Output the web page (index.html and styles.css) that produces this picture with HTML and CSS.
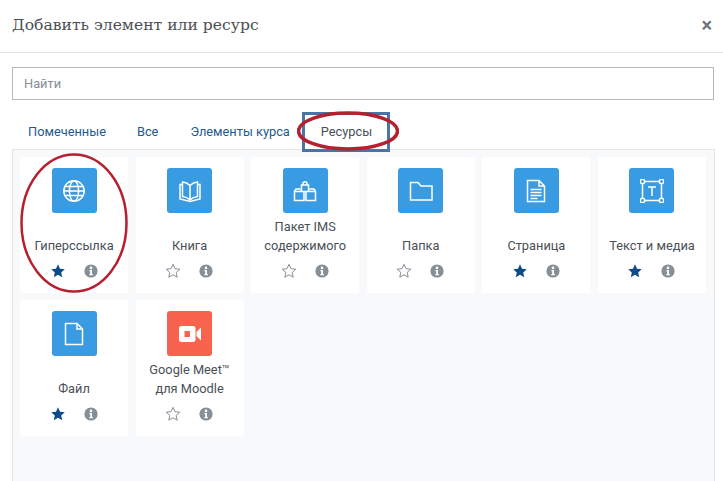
FILE: index.html
```html
<!DOCTYPE html>
<html lang="ru">
<head>
<meta charset="utf-8">
<title>Добавить элемент или ресурс</title>
<link rel="stylesheet" href="styles.css">
</head>
<body>
<svg width="0" height="0" class="defs">
  <symbol id="star" viewBox="0 0 16 16"><path d="M8 1.300l2 4.400 4.800.5-3.600 3.200 1 4.800L8 11.800 3.800 14.200l1-4.800L1.200 6.200 6 5.700z"/></symbol>
  <symbol id="info" viewBox="0 0 16 16"><circle cx="8" cy="8" r="6.600" fill="#868e96"/><circle cx="8" cy="4.900" r="1.300" fill="#fff"/><path d="M6.400 7h2.600v4h.9v1.200H6.300V11h.9V8.200h-.8z" fill="#fff"/></symbol>
</svg>
<main class="modal">
  <header class="modal-head">
    <h1 class="modal-title">Добавить элемент или ресурс</h1>
    <span class="close">×</span>
  </header>
  <div class="search"><input class="search-input" type="text" placeholder="Найти"></div>
  <nav class="tabs">
    <a class="tab">Помеченные</a>
    <a class="tab">Все</a>
    <a class="tab">Элементы курса</a>
    <a class="tab tab-active">Ресурсы</a>
  </nav>
  <section class="panel">
    <article class="card">
      <div class="tile"><svg viewBox="0 0 24 24" class="glyph"><circle cx="12" cy="12" r="10.200"/><ellipse cx="12" cy="12" rx="4.600" ry="10.200"/><path d="M3 7.400h18M1.800 12h20.400M3 16.600h18"/></svg></div>
      <div class="label">Гиперссылка</div>
      <div class="actions"><svg class="star on"><use href="#star"/></svg><svg class="info"><use href="#info"/></svg></div>
    </article>
    <article class="card">
      <div class="tile"><svg viewBox="0 0 24 24" class="glyph"><path d="M12 6.500C10 4.500 7 3.200 4.500 3v14.500c2.800.3 5.500 1.300 7.500 3.500 2-2.200 4.700-3.200 7.500-3.500V3C17 3.200 14 4.500 12 6.500zM12 6.500V21"/><path d="M4.500 5.500H2v14.500l10 2.500 10-2.500V5.500h-2.500"/></svg></div>
      <div class="label">Книга</div>
      <div class="actions"><svg class="star off"><use href="#star"/></svg><svg class="info"><use href="#info"/></svg></div>
    </article>
    <article class="card">
      <div class="tile"><svg viewBox="0 0 24 24" class="glyph"><path d="M8.500 6h7v6.500h-7zM9.800 6C9.800 1.800 14.200 1.800 14.200 6M1.500 12.500h9.500v9H1.500zM13 12.500h9.500v9H13zM1.500 12.500l1.500-2.500h5.500M22.500 12.500L21 10h-5.500"/></svg></div>
      <div class="label">Пакет IMS содержимого</div>
      <div class="actions"><svg class="star off"><use href="#star"/></svg><svg class="info"><use href="#info"/></svg></div>
    </article>
    <article class="card">
      <div class="tile"><svg viewBox="0 0 24 24" class="glyph"><path d="M1.500 3.500h7.500l3 3.500h11v14H1.500z"/></svg></div>
      <div class="label">Папка</div>
      <div class="actions"><svg class="star off"><use href="#star"/></svg><svg class="info"><use href="#info"/></svg></div>
    </article>
    <article class="card">
      <div class="tile"><svg viewBox="0 0 24 24" class="glyph"><path d="M3.500 1.500h11.500l5.500 5.500v15.500h-17zM15 1.500v5.500h5.500M6.500 10.500h11M6.500 13.500h11M6.500 16.500h11M6.500 19.500h7"/></svg></div>
      <div class="label">Страница</div>
      <div class="actions"><svg class="star on"><use href="#star"/></svg><svg class="info"><use href="#info"/></svg></div>
    </article>
    <article class="card">
      <div class="tile"><svg viewBox="0 0 24 24" class="glyph"><path d="M4.800 2.500h14.400M4.800 21.500h14.400M2.500 4.800v14.400M21.500 4.800v14.400"/><circle cx="2.500" cy="2.500" r="2.200"/><circle cx="21.500" cy="2.500" r="2.200"/><circle cx="2.500" cy="21.500" r="2.200"/><circle cx="21.500" cy="21.500" r="2.200"/><path d="M8 8h8M12 8v9"/></svg></div>
      <div class="label">Текст и медиа</div>
      <div class="actions"><svg class="star on"><use href="#star"/></svg><svg class="info"><use href="#info"/></svg></div>
    </article>
    <article class="card">
      <div class="tile"><svg viewBox="0 0 24 24" class="glyph"><path d="M3.500 1.500h11.500l5.500 5.500v15.500h-17zM15 1.500v5.500h5.500"/></svg></div>
      <div class="label">Файл</div>
      <div class="actions"><svg class="star on"><use href="#star"/></svg><svg class="info"><use href="#info"/></svg></div>
    </article>
    <article class="card">
      <div class="tile tile-red"><svg viewBox="0 0 24 24" class="glyph-solid"><path fill-rule="evenodd" d="M3.500 4h11.500a2.500 2.500 0 0 1 2.500 2.500v11a2.500 2.500 0 0 1-2.500 2.500H3.500A2.500 2.500 0 0 1 1 17.500v-11A2.500 2.500 0 0 1 3.500 4zM6.500 9v6h5.500V9z"/><path d="M18.500 10l4.500-4.500v13L18.500 14z"/></svg></div>
      <div class="label">Google Meet™ для Moodle</div>
      <div class="actions"><svg class="star off"><use href="#star"/></svg><svg class="info"><use href="#info"/></svg></div>
    </article>
  </section>
</main>
<div class="mark-box"></div>
<svg class="mark-oval mark-tab" viewBox="0 0 102 40"><ellipse cx="51" cy="20" rx="49.500" ry="18"/></svg>
<svg class="mark-oval mark-card" viewBox="0 0 108 140"><ellipse cx="54" cy="70" rx="52.500" ry="68.500"/></svg>
</body>
</html>
```
FILE: styles.css
```css
* { box-sizing: border-box; }
html, body { margin: 0; height: 100%; }
body {
  background: #fff;
  font-family: Roboto, "Liberation Sans", sans-serif;
  font-size: 12.800px;
  color: #495057;
  overflow: hidden;
  position: relative;
}
.defs { position: absolute; }
.modal { display: flex; flex-direction: column; height: 481px; }
.modal-head {
  flex: none;
  height: 53px;
  border-bottom: 1px solid #dee2e6;
  display: flex;
  align-items: center;
  justify-content: space-between;
  padding: 0 11px 2px 12px;
}
.modal-title {
  margin: 0;
  font-family: "DejaVu Serif", serif;
  font-weight: 400;
  font-size: 15.600px;
  color: #4b4f52;
}
.close { font-size: 20px; font-weight: 700; color: #6f7478; line-height: 1; }
.search { padding: 14px 9px 0 12px; }
.search-input {
  display: block;
  width: 100%;
  height: 33px;
  border: 1px solid #b5b8ba;
  padding: 0 11px;
  font: 12.800px Roboto, sans-serif;
  outline: none;
}
.search-input::placeholder { color: #868e96; opacity: 1; }
.tabs {
  display: flex;
  height: 49px;
  padding: 14px 0 0 16px;
}
.tab { padding: 9px 12px 0; color: #1d5a8e; line-height: 18px; }
.tab:nth-child(2) { padding: 9px 14px 0 19px; }
.tab:nth-child(3) { padding: 9px 13px 0 18px; margin-right: 5px; }
.tab-active { color: #495057; padding-left: 13px; }
.panel {
  flex: 1;
  margin: 0 8px 0 12px;
  background: #f8f9fa;
  border: 1px solid #e4e7ea;
  border-bottom: 0;
  padding: 7px 8px 0 7px;
  display: grid;
  grid-template-columns: repeat(6, 108px);
  grid-auto-rows: 136px;
  column-gap: 7.600px;
  row-gap: 7px;
  align-content: start;
}
.card {
  background: #fff;
  display: flex;
  flex-direction: column;
  align-items: center;
  padding-top: 11px;
}
.tile {
  flex: none;
  width: 45px;
  height: 45px;
  border-radius: 3px;
  background: #399be2;
  display: flex;
  align-items: center;
  justify-content: center;
}
.tile-red { background: #f7634d; }
.glyph { width: 24px; height: 24px; fill: none; stroke: #fff; stroke-width: 1.500; }
.glyph-solid { width: 24px; height: 24px; fill: #fff; }
.label {
  flex: none;
  height: 38px;
  margin-top: 4px;
  width: 100%;
  padding: 0 4px;
  display: flex;
  align-items: flex-end;
  justify-content: center;
  text-align: center;
  line-height: 18.500px;
}
.actions {
  margin-top: 8px;
  display: flex;
  justify-content: center;
  gap: 17px;
}
.star, .info { width: 16px; height: 16px; display: block; }
.star.on { fill: #0f4a8a; }
.star.off { fill: #fff; stroke: #868e96; stroke-width: 1; }
.mark-box {
  position: absolute;
  left: 302px;
  top: 112px;
  width: 88px;
  height: 40px;
  border: 3px solid #4a74a8;
}
.mark-oval { position: absolute; fill: none; stroke: #b5202f; stroke-width: 2.500; }
.mark-tab { left: 297px; top: 111px; width: 102px; height: 40px; stroke-width: 3.500; }
.mark-card { left: 20px; top: 153px; width: 108px; height: 140px; }
```
